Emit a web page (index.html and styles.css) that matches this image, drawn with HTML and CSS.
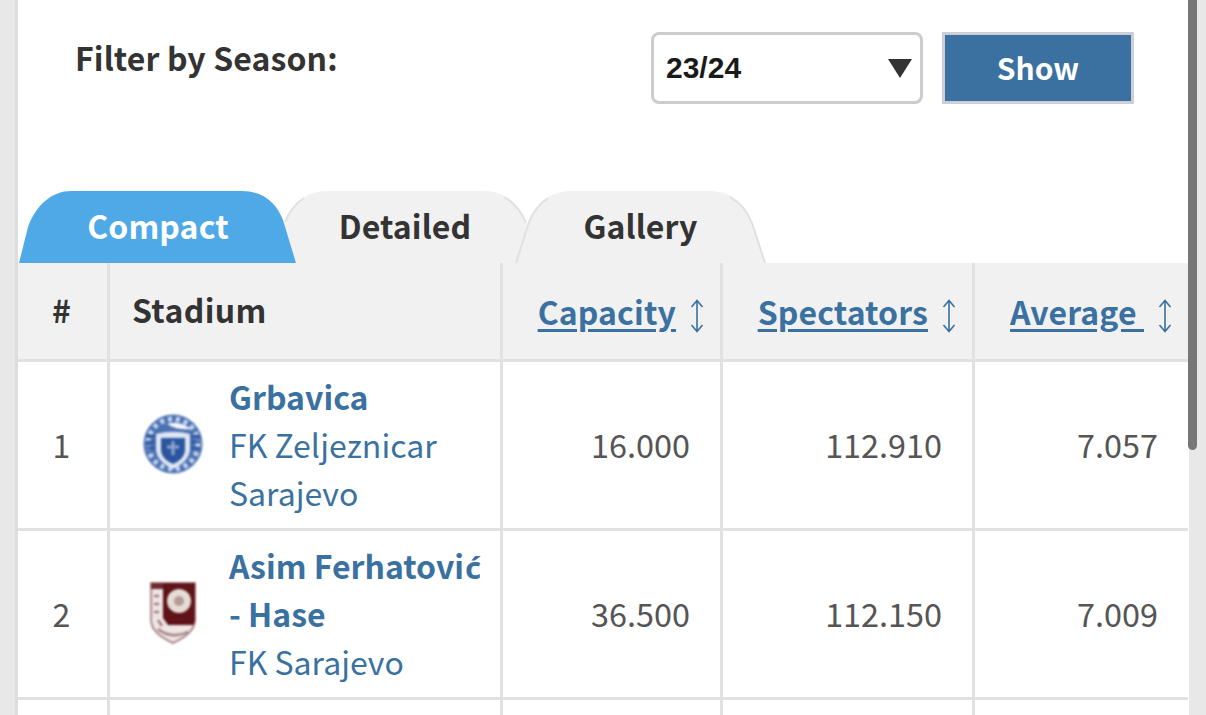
FILE: index.html
```html
<!DOCTYPE html>
<html lang="en">
<head>
<meta charset="utf-8">
<title>Stadiums</title>
<link rel="stylesheet" href="styles.css">
</head>
<body>
<div class="scrollbar"></div>
<main class="panel">
  <form class="filter">
    <label class="filter-label" for="season">Filter by Season:</label>
    <div class="filter-controls">
      <div class="select-wrap">
        <select id="season" class="select"><option>23/24</option></select>
      </div>
      <button type="button" class="show">Show</button>
    </div>
  </form>
  <nav class="tabs">
    <a class="tab tab-compact">
      <svg class="tab-bg" viewBox="0 0 278 72"><path class="fill-active" d="M0 72 L9 36 C17 13 34 0 52 0 H223 C243 0 257 11 264 29 L277 72 Z"/></svg>
      <span class="tab-text tab-text-active">Compact</span>
    </a>
    <a class="tab tab-detailed">
      <svg class="tab-bg" viewBox="0 0 268 72">
        <path class="fill-idle" d="M1 72 L14 31 C21 12 37 0 55 0 H213 C233 0 248 12 255 32 L267 72 Z"/>
        <path class="edge-idle" d="M14 31 C19 19 25 12 33 7 M255 32 C250 19 242 11 233 6"/>
      </svg>
      <span class="tab-text">Detailed</span>
    </a>
    <a class="tab tab-gallery">
      <svg class="tab-bg" viewBox="0 0 251 72">
        <path class="fill-idle" d="M0 72 L14 31 C21 12 37 0 55 0 H195 C215 0 230 12 237 32 L251 72 Z"/>
        <path class="edge-idle" d="M1 72 L14 31 C19 19 25 12 33 7 M250 72 L237 32 C232 19 224 11 215 6"/>
      </svg>
      <span class="tab-text">Gallery</span>
    </a>
  </nav>
  <table class="stadiums">
    <colgroup>
      <col class="c-rank"><col class="c-name"><col class="c-cap"><col class="c-spec"><col class="c-avg">
    </colgroup>
    <thead>
      <tr>
        <th class="rank head-plain">#</th>
        <th class="name-head head-plain">Stadium</th>
        <th class="sort"><a class="sort-link">Capacity</a><svg class="sort-icon" viewBox="0 0 14 34"><path d="M7 1V33M1.500 8 7 1.500 12.500 8M1.500 26 7 32.500 12.500 26"/></svg></th>
        <th class="sort"><a class="sort-link">Spectators</a><svg class="sort-icon" viewBox="0 0 14 34"><path d="M7 1V33M1.500 8 7 1.500 12.500 8M1.500 26 7 32.500 12.500 26"/></svg></th>
        <th class="sort"><a class="sort-link">Average&nbsp;</a><svg class="sort-icon" viewBox="0 0 14 34"><path d="M7 1V33M1.500 8 7 1.500 12.500 8M1.500 26 7 32.500 12.500 26"/></svg></th>
      </tr>
    </thead>
    <tbody>
      <tr>
        <td class="rank">1</td>
        <td>
          <div class="venue">
            <div class="logo">
              <svg class="badge" width="60" height="60" viewBox="0 0 60 60">
                <circle cx="30" cy="30" r="29.500" fill="#4a72b4"/>
                <circle cx="30" cy="30" r="25" fill="none" stroke="#c9d5ea" stroke-width="5" stroke-dasharray="4 4"/>
                <path d="M13 20 C24 17 36 17 47 20 V35 C47 45 37 52 30 55 C23 52 13 45 13 35 Z" fill="#dfe5f1"/>
                <path d="M18 24 H42 V36 C42 43 35 48 30 50 C25 48 18 43 18 36 Z" fill="#2c559f"/>
                <path d="M24 10 C32 7 42 10 48 15 C40 16 32 15 24 10 Z" fill="#f5f6fa"/>
                <path d="M30 27 V41 M24 33 H36" stroke="#8ea5cd" stroke-width="3"/>
                <path d="M3 22 H12 M3 28 H12 M3 34 H12 M48 22 H57 M48 28 H57 M48 34 H57" stroke="#2c559f" stroke-width="2.500"/>
              </svg>
            </div>
            <div class="venue-text">
              <a class="venue-name">Grbavica</a>
              <a class="venue-club">FK Zeljeznicar Sarajevo</a>
            </div>
          </div>
        </td>
        <td class="num">16.000</td>
        <td class="num">112.910</td>
        <td class="num">7.057</td>
      </tr>
      <tr>
        <td class="rank">2</td>
        <td>
          <div class="venue">
            <div class="logo">
              <svg class="badge" width="46" height="62" viewBox="0 0 46 62">
                <path d="M1 1 H45 V38 C45 50 32 57 23 61 C14 57 1 50 1 38 Z" fill="#eee5e5" stroke="#9a6a6d" stroke-width="1.500"/>
                <path d="M13 1 H45 V38 C45 40 44 42 43 43 H18 L13 36 Z" fill="#5e1418"/>
                <path d="M1 1 H13 V7 H1 Z" fill="#6d2b30"/>
                <circle cx="29" cy="19" r="12" fill="#e6dcd6"/>
                <circle cx="29" cy="19" r="5" fill="#b49c98"/>
                <path d="M4 14 H9 M4 22 H9 M4 30 H9 M8 38 L12 44 M8 47 C16 54 28 55 38 50" fill="none" stroke="#a47f82" stroke-width="2.500"/>
              </svg>
            </div>
            <div class="venue-text">
              <a class="venue-name">Asim Ferhatovi<span class="glyph-fallback">&#263;</span><br>- Hase</a>
              <a class="venue-club">FK Sarajevo</a>
            </div>
          </div>
        </td>
        <td class="num">36.500</td>
        <td class="num">112.150</td>
        <td class="num">7.009</td>
      </tr>
      <tr class="row-cut">
        <td></td><td></td><td></td><td></td><td></td>
      </tr>
    </tbody>
  </table>
</main>
</body>
</html>
```
FILE: styles.css
```css
* { box-sizing: border-box; }
html, body { height: 100%; }
body {
  margin: 0;
  background: #e8e8e8;
  overflow: hidden;
  font-family: "Noto Sans CJK SC", "Noto Sans", sans-serif;
  color: #555;
  font-size: 32px;
}
.panel {
  margin-left: 15px;
  width: 1174px;
  height: 715px;
  border-left: 3px solid #ddd;
  background: #fff;
  overflow: hidden;
}
.scrollbar {
  position: absolute;
  left: 1188px;
  top: 0;
  width: 9px;
  height: 450px;
  background: #777;
  border-radius: 0 0 5px 5px;
}
.filter {
  height: 191px;
  display: flex;
  justify-content: space-between;
  align-items: flex-start;
  padding: 29px 55px 0 57px;
}
.filter-label {
  font-weight: 700;
  font-size: 32px;
  letter-spacing: 0.1px;
  line-height: 56px;
  color: #333;
}
.filter-controls { display: flex; gap: 19px; margin-top: 3px; }
.select-wrap { position: relative; }
.select-wrap::after {
  content: "";
  position: absolute;
  right: 11px;
  top: 27px;
  border-left: 12px solid transparent;
  border-right: 12px solid transparent;
  border-top: 19px solid #333;
  pointer-events: none;
}
.select {
  display: block;
  appearance: none;
  width: 272px;
  height: 72px;
  padding: 0 12px 2px;
  border: 3px solid #ccc;
  border-radius: 8px;
  background: #fff;
  font-family: "Liberation Sans", Arial, sans-serif;
  font-size: 30px;
  font-weight: 700;
  color: #1a1a1a;
}
.show {
  width: 192px;
  height: 72px;
  margin-top: 0;
  padding: 0 0 2px;
  border: 3px solid #ccd0d6;
  background: #3a71a0;
  color: #fff;
  font-family: inherit;
  font-size: 30px;
  font-weight: 700;
}
.tabs {
  position: relative;
  display: flex;
  height: 72px;
  padding-left: 1px;
}
.tab {
  position: relative;
  display: flex;
  justify-content: center;
  height: 72px;
  font-size: 32px;
  font-weight: 700;
  letter-spacing: 0.1px;
  line-height: 68px;
  color: #333;
}
.tab-bg { position: absolute; left: 0; top: 0; width: 100%; height: 100%; }
.tab-text { position: relative; }
.tab-text-active { color: #fff; }
.tab-compact { width: 278px; z-index: 3; }
.tab-detailed { width: 268px; margin-left: -26px; z-index: 1; }
.tab-gallery { width: 251px; margin-left: -24px; z-index: 2; }
.fill-active { fill: #4ea9e6; }
.fill-idle { fill: #f1f1f1; }
.edge-idle { fill: none; stroke: #e0e0e0; stroke-width: 2; }
.stadiums {
  width: 1170px;
  table-layout: fixed;
  border-collapse: separate;
  border-spacing: 0;
}
.c-rank { width: 92px; }
.c-name { width: 393px; }
.c-cap { width: 220px; }
.c-spec { width: 252px; }
.c-avg { width: 213px; }
th, td {
  border-right: 3px solid #e1e1e1;
  border-bottom: 3px solid #e1e1e1;
  padding: 0;
}
th:last-child, td:last-child { border-right: 0; }
th {
  height: 99px;
  background: #f1f1f1;
  color: #333;
  font-size: 32px;
  font-weight: 700;
  text-align: left;
}
.head-plain { padding-bottom: 4px; letter-spacing: 0.35px; }
tbody tr { height: 169px; }
.row-cut { height: 40px; }
.rank { text-align: center; padding-right: 2px; }
td.rank { color: #555; padding-bottom: 3px; }
.name-head { padding-left: 22px; }
.sort {
  text-align: right;
  padding-right: 16px;
  white-space: nowrap;
  letter-spacing: 0.12px;
}
.sort-link {
  color: #3a71a0;
  text-decoration: underline;
  text-underline-offset: 4px;
}
.sort-icon {
  width: 14px;
  height: 34px;
  margin-left: 14px;
  vertical-align: middle;
  fill: none;
  stroke: #3a71a0;
  stroke-width: 1.600;
}
.venue { display: flex; align-items: center; gap: 16px; padding: 0 0 2px 23px; }
.logo { flex: 0 0 80px; display: flex; justify-content: center; }
.badge { display: block; filter: blur(1.300px); }
.venue-text { line-height: 48px; color: #3a71a0; margin-bottom: 1px; }
.venue-name { display: block; font-weight: 700; }
.glyph-fallback { font-family: "Noto Sans", sans-serif; font-size: 31px; line-height: 0; padding-left: 1px; }
.venue-club { display: block; }
.num { text-align: right; padding: 0 30px 3px 0; font-size: 32.400px; }
```
